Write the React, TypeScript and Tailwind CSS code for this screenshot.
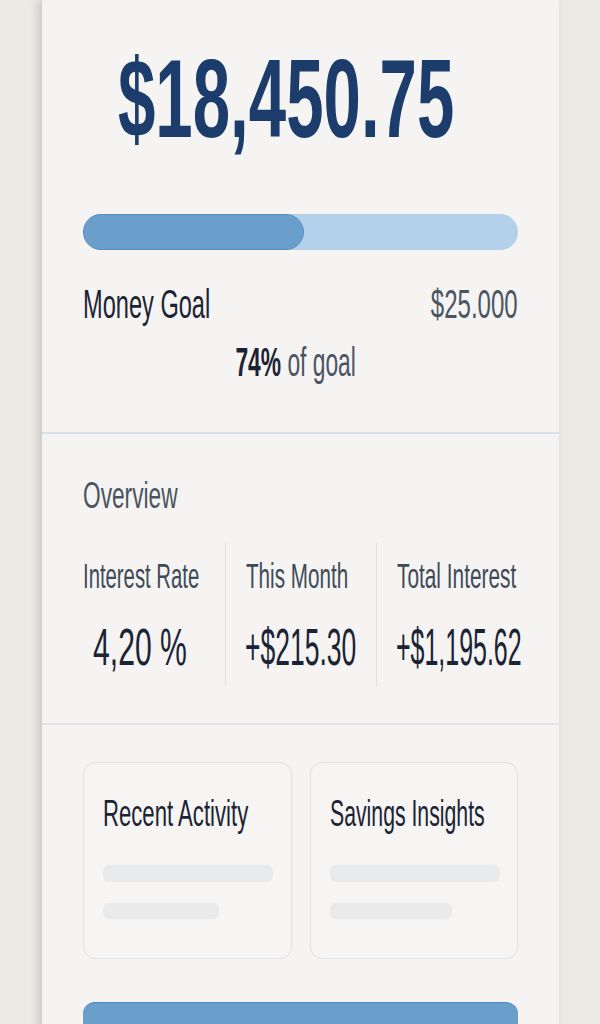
import React from 'react'

// Condensed look: the source face is very narrow, so squeeze Liberation Sans
const font = { fontFamily: '"Liberation Sans", Arial, sans-serif' }

function Stat({ label, value, labelClass, valueClass, first }: {
  label: string
  value: string
  labelClass: string
  valueClass: string
  first?: boolean
}) {
  return (
    <div className={first ? 'pt-[15px] pb-[14px]' : 'pt-[15px] pb-[14px] border-l border-[#dde2e7] pl-[20px]'}>
      <div className="whitespace-nowrap leading-none">
        <span className={'inline-block text-[35px] leading-none text-[#3f4a57] ' + labelClass}>{label}</span>
      </div>
      <div className={first ? 'mt-[28px] whitespace-nowrap leading-none pl-[10px]' : 'mt-[28px] whitespace-nowrap leading-none -ml-[1px]'}>
        <span className={'inline-block text-[52px] leading-none text-[#1b2434] ' + valueClass}>{value}</span>
      </div>
    </div>
  )
}

function InfoCard({ title, titleClass, long, short }: { title: string; titleClass: string; long: string; short: string }) {
  return (
    <div className="h-[197px] rounded-[12px] border-[1.5px] border-[#dbe2ea] bg-[#f6f5f3] pl-[19px] pr-[18px] pt-[33px]">
      <div className="whitespace-nowrap leading-none">
        <span className={'inline-block text-[36px] leading-none text-[#1b2434] origin-left ' + titleClass}>{title}</span>
      </div>
      <div className={'mt-[33px] h-[17px] rounded-md bg-[#e9eaeb] ' + long} />
      <div className={'mt-[21px] h-[16px] rounded-md bg-[#e9eaeb] ' + short} />
    </div>
  )
}

export default function App() {
  return (
    <div className="min-h-[1024px] bg-[#ece9e5] overflow-hidden" style={font}>
      <div className="ml-[42px] w-[517px] bg-[#f5f4f2] shadow-[-4px_0_8px_rgba(0,0,0,0.14)] pb-[40px]">
        {/* Balance + goal */}
        <div className="px-[41px] pt-[43px] pb-[50px]">
          <div className="pl-[35px] whitespace-nowrap leading-none">
            <span className="inline-block text-[112px] font-bold leading-none text-[#1c3d6c] scale-x-[0.6] origin-left">$18,450.75</span>
          </div>

          <div className="mt-[59px] h-[36px] rounded-full bg-[#b3d1ea] flex">
            <div className="w-[221px] h-full rounded-full bg-[#6a9fcc] border border-[#5a8fc2]" />
          </div>

          <div className="mt-[34px] flex justify-between items-start whitespace-nowrap leading-none">
            <span className="inline-block text-[40px] leading-none text-[#1c2333] scale-x-[0.59] origin-left">Money Goal</span>
            <span className="inline-block text-[40px] leading-none text-[#4b5563] scale-x-[0.6] origin-right">$25.000</span>
          </div>

          <div className="mt-[18px] flex justify-center pr-[10px] whitespace-nowrap leading-none">
            <span className="inline-block text-[40px] leading-none scale-x-[0.57] origin-center">
              <span className="font-bold text-[#1c2333]">74%</span>
              <span className="text-[#4b5563]"> of goal</span>
            </span>
          </div>
        </div>

        {/* Overview */}
        <div className="border-t-2 border-[#d6e1ec] px-[41px] pt-[44px] pb-[36px]">
          <div className="whitespace-nowrap leading-none">
            <span className="inline-block text-[36px] leading-none text-[#4a5561] scale-x-[0.63] origin-left">Overview</span>
          </div>
          <div className="mt-[29px] grid grid-cols-[142px_151px_141px]">
            <Stat first label="Interest Rate" value="4,20 %" labelClass="scale-x-[0.58] origin-left" valueClass="scale-x-[0.58] origin-left" />
            <Stat label="This Month" value="+$215.30" labelClass="scale-x-[0.59] origin-left" valueClass="scale-x-[0.51] origin-left" />
            <Stat label="Total Interest" value="+$1,195.62" labelClass="scale-x-[0.595] origin-left" valueClass="scale-x-[0.48] origin-left" />
          </div>
        </div>

        {/* Cards */}
        <div className="border-t-2 border-[#e0e4e8] px-[41px] pt-[37px]">
          <div className="grid grid-cols-2 gap-[18px]">
            <InfoCard title="Recent Activity" titleClass="scale-x-[0.615]" long="w-[170px]" short="w-[116px]" />
            <InfoCard title="Savings Insights" titleClass="scale-x-[0.59]" long="w-[170px]" short="w-[122px]" />
          </div>
          <div className="mt-[43px] h-[56px] rounded-[12px] bg-[#6a9fcc] border-t border-[#4f86bd]" />
        </div>
      </div>
    </div>
  )
}
